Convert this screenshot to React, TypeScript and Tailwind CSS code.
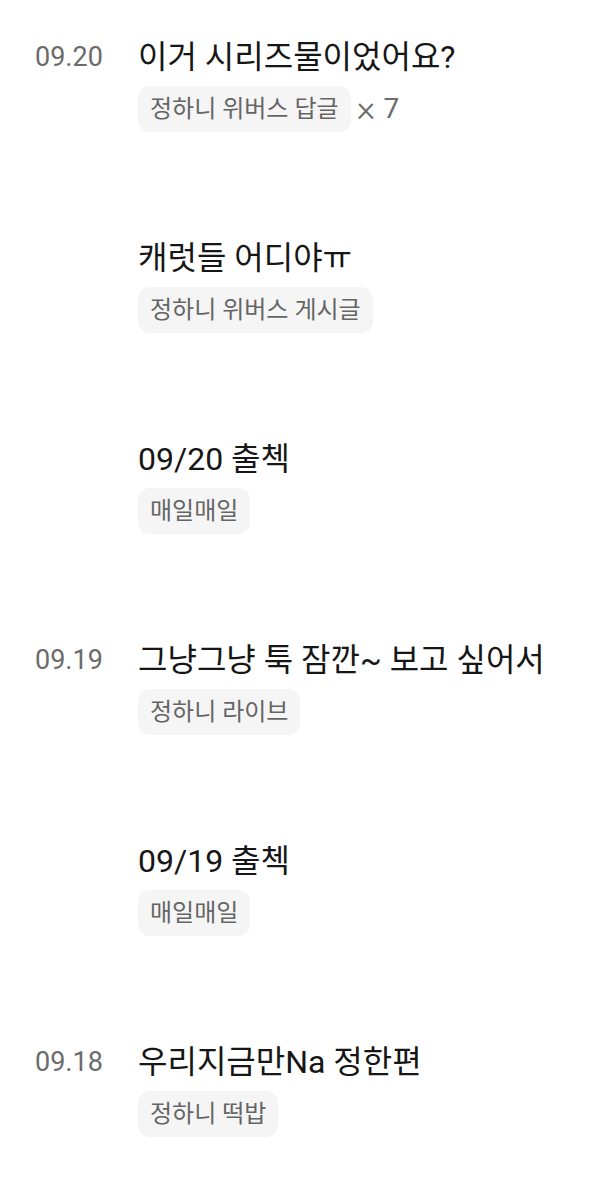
const items = [
  { date: '09.20', title: '이거 시리즈물이었어요?', tag: '정하니 위버스 답글', count: 7 },
  { date: '', title: '캐럿들 어디야ㅠ', tag: '정하니 위버스 게시글' },
  { date: '', title: '09/20 출첵', tag: '매일매일' },
  { date: '09.19', title: '그냥그냥 툭 잠깐~ 보고 싶어서', tag: '정하니 라이브' },
  { date: '', title: '09/19 출첵', tag: '매일매일' },
  { date: '09.18', title: '우리지금만Na 정한편', tag: '정하니 떡밥' },
]

export default function App() {
  return (
    <div
      className="min-h-[1200px] bg-white pt-[37px]"
      style={{ fontFamily: 'Roboto, "Noto Sans CJK KR", sans-serif' }}
    >
      {items.map((item, i) => (
        <div key={i} className="flex h-[201px]">
          <div className="w-[138px] shrink-0 pl-[35px] text-[27px] leading-[40px] text-[#6b6b6b]">
            {item.date}
          </div>
          <div className="flex flex-col items-start">
            <div className="text-[32px] leading-[40px] text-[#161616]">{item.title}</div>
            <div className="mt-[9px] flex items-center">
              <span className="flex h-[46px] items-center rounded-[12px] bg-[#f5f5f5] px-[12px] text-[24px] text-[#656565]">
                {item.tag}
              </span>
              {item.count && (
                <span className="ml-[6px] flex items-center gap-[8px] text-[28px] leading-none text-[#6b6b6b]">
                  <span className="text-[36px] font-light">×</span>
                  {item.count}
                </span>
              )}
            </div>
          </div>
        </div>
      ))}
    </div>
  )
}
